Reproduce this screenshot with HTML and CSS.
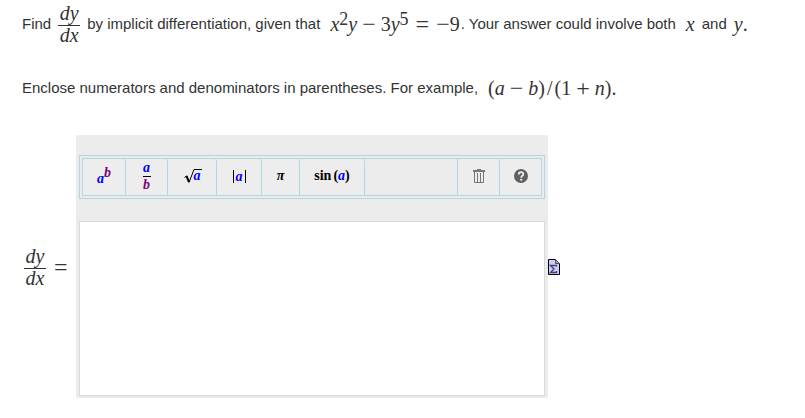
FILE: index.html
```
<!DOCTYPE html>
<html lang="en">
<head>
    <meta charset="UTF-8">
    <meta name="viewport" content="width=device-width, initial-scale=1.0">
    <title>Implicit differentiation</title>
    <link rel="stylesheet" href="styles.css">
</head>
<body>
    <main class="question">
        <p class="prompt">
            <span>Find</span>
            <span class="frac"><i>dy</i><i>dx</i></span>
            <span>by implicit differentiation, given that</span>
            <span class="math equation"><span><i>x</i><sup>2</sup><i>y</i></span><span class="op">−</span><span>3<i>y</i><sup>5</sup></span><span class="op equals">=</span><span class="negative"><span class="op">−</span>9</span></span><span class="after">. Your answer could involve both</span>
            <i class="math">x</i>
            <span>and</span>
            <span class="math"><i>y</i>.</span>
        </p>
        <p class="hint">
            <span>Enclose numerators and denominators in parentheses. For example,</span>
            <span class="math example"><span>(<i>a</i></span><span class="op">−</span><span><i>b</i>)<span class="slash">/</span>(1</span><span class="op">+</span><span><i>n</i>).</span></span>
        </p>
        <div class="answer">
            <label class="answer-label" for="answer"><span class="frac"><i>dy</i><i>dx</i></span><span class="math op">=</span></label>
            <div class="editor">
                <div class="toolbar">
                    <div class="tools">
                        <button type="button" class="tool power" aria-label="Exponent"><i class="base">a</i><sup class="exp">b</sup></button>
                        <button type="button" class="tool" aria-label="Fraction"><span class="tool-frac"><i class="base">a</i><i class="exp">b</i></span></button>
                        <button type="button" class="tool root" aria-label="Square root">
                            <svg width="18" height="16" viewBox="0 0 18 16" fill="none" stroke="#000"><path d="M0.5 9.5L2.5 8" /><path d="M2.5 8L5 14" stroke-width="2" /><path d="M5 14.5L10 1.5H18" /></svg>
                            <i class="base">a</i>
                        </button>
                        <button type="button" class="tool abs" aria-label="Absolute value"><span class="bars"><i class="base">a</i></span></button>
                        <button type="button" class="tool pi" aria-label="Pi"><i>π</i></button>
                        <button type="button" class="tool sine" aria-label="Sine">sin<span>(<i class="base">a</i>)</span></button>
                        <span class="space"></span>
                        <button type="button" class="tool" aria-label="Clear">
                            <svg width="12" height="14" viewBox="0 0 12 14" fill="none" stroke="#777"><path d="M4 0.5H8" /><path d="M0 2H12" stroke-width="2" /><path d="M1.5 3V13.5H10.5V3M4.5 4V13M7.5 4V13" /></svg>
                        </button>
                        <button type="button" class="tool help" aria-label="Help">
                            <svg width="14" height="14" viewBox="0 0 14 14" fill="none"><circle cx="7" cy="7" r="7" fill="#606060" /><path d="M4.8 5.4C4.8 2.5 9.3 2.5 9.3 5.2C9.3 6.9 7.2 6.7 7.2 8.7" stroke="#eee" stroke-width="1.8" /><path d="M6.2 9.8H8.2V11.6H6.2Z" fill="#eee" /></svg>
                        </button>
                    </div>
                </div>
                <textarea class="field" id="answer"></textarea>
            </div>
            <a class="preview" href="#" aria-label="Preview">
                <svg width="12" height="16" viewBox="0 0 12 16" fill="none"><path d="M0.5 0.5H7.5L11.5 4.5V15.5H0.5Z" fill="#ccf" stroke="#000" /><path d="M7.5 0.5V4.5H11.5" fill="#aaa" stroke="#555" /><path d="M8.5 7.5V6.5H2.5L6 10L2.5 13.5H8.5V12" stroke="#446" stroke-width="1.4" /></svg>
            </a>
        </div>
    </main>
</body>
</html>
```
FILE: styles.css
```
body {
    margin: 0;
    background: #fff;
    color: #333;
    font-family: "Liberation Sans", Arial, sans-serif;
    font-size: 15px;
    line-height: 20px;
}
.question {
    padding: 4px 22px 20px;
}
p {
    display: flex;
    align-items: center;
    flex-wrap: wrap;
    gap: 7px;
    margin: 0;
}
.prompt {
    min-height: 40px;
}
.hint {
    margin-top: 34px;
}
.math,
.frac {
    font-family: "Liberation Serif", "Times New Roman", serif;
    font-size: 20px;
    line-height: 20px;
}
.equation,
.example {
    display: inline-flex;
    gap: 5px;
    margin-left: 3px;
}
.op {
    font-size: 24px;
}
.equals {
    margin: 0 2px;
}
.negative {
    display: flex;
}
.math sup {
    font-size: 18px;
    line-height: 0;
    vertical-align: 6px;
}
.after {
    margin: 0 3px 0 -6px;
}
.slash {
    margin: 0 2px;
}
.frac {
    display: inline-flex;
    flex-direction: column;
    min-width: 22px;
    text-align: center;
    line-height: 18px;
}
.frac i:first-child {
    padding-bottom: 3px;
    border-bottom: 1px solid #333;
}
.answer {
    display: flex;
    align-items: center;
    margin-top: 37px;
}
.answer-label {
    display: flex;
    align-items: center;
    gap: 8px;
    flex: 0 0 52px;
    padding-left: 2px;
}
.editor {
    flex: 0 1 472px;
    box-sizing: border-box;
    padding: 20px 3px 2px;
    background: #ebebeb;
    border-radius: 2px;
}
.toolbar {
    padding: 2px;
    border: 1px solid #add8e6;
}
.tools {
    display: flex;
    height: 36px;
    border: 1px solid #add8e6;
}
.tool {
    display: flex;
    justify-content: center;
    align-items: center;
    flex: 0 0 42px;
    box-sizing: border-box;
    padding: 0 0 2px;
    border: 0;
    border-right: 1px solid #add8e6;
    border-radius: 3px 3px 0 0;
    background: #ededed;
    color: #000;
    font: bold 14px/16px "Liberation Serif", "Times New Roman", serif;
    cursor: pointer;
}
.tool:last-child {
    border-right: 0;
}
.tool:hover {
    background: #f7f7f7;
}
.base {
    color: #00f;
}
.exp {
    color: #800080;
    font-style: italic;
}
.power {
    flex-basis: 43px;
}
.power .base {
    padding-top: 6px;
}
.power .exp {
    font-size: 14px;
    padding-bottom: 6px;
}
.tool-frac {
    display: flex;
    flex-direction: column;
    width: 8px;
}
.tool-frac .base {
    border-bottom: 1px solid #000;
}
.root {
    flex-basis: 49px;
}
.root .base {
    margin-left: -8px;
}
.abs {
    flex-basis: 45px;
}
.bars {
    padding: 0 2px;
    border: solid #000;
    border-width: 0 1px;
    line-height: 13px;
}
.pi {
    flex-basis: 38px;
}
.sine {
    flex-basis: 65px;
    gap: 2px;
}
.help {
    flex-basis: 41px;
}
.space {
    flex: 1;
    border-right: 1px solid #add8e6;
}
.field {
    display: block;
    box-sizing: border-box;
    width: 100%;
    height: 175px;
    margin-top: 22px;
    padding: 8px;
    border: 1px solid #d9d9d9;
    background: #fff;
    font: 20px "Liberation Serif", "Times New Roman", serif;
    resize: none;
}
.preview {
    display: flex;
}
```
